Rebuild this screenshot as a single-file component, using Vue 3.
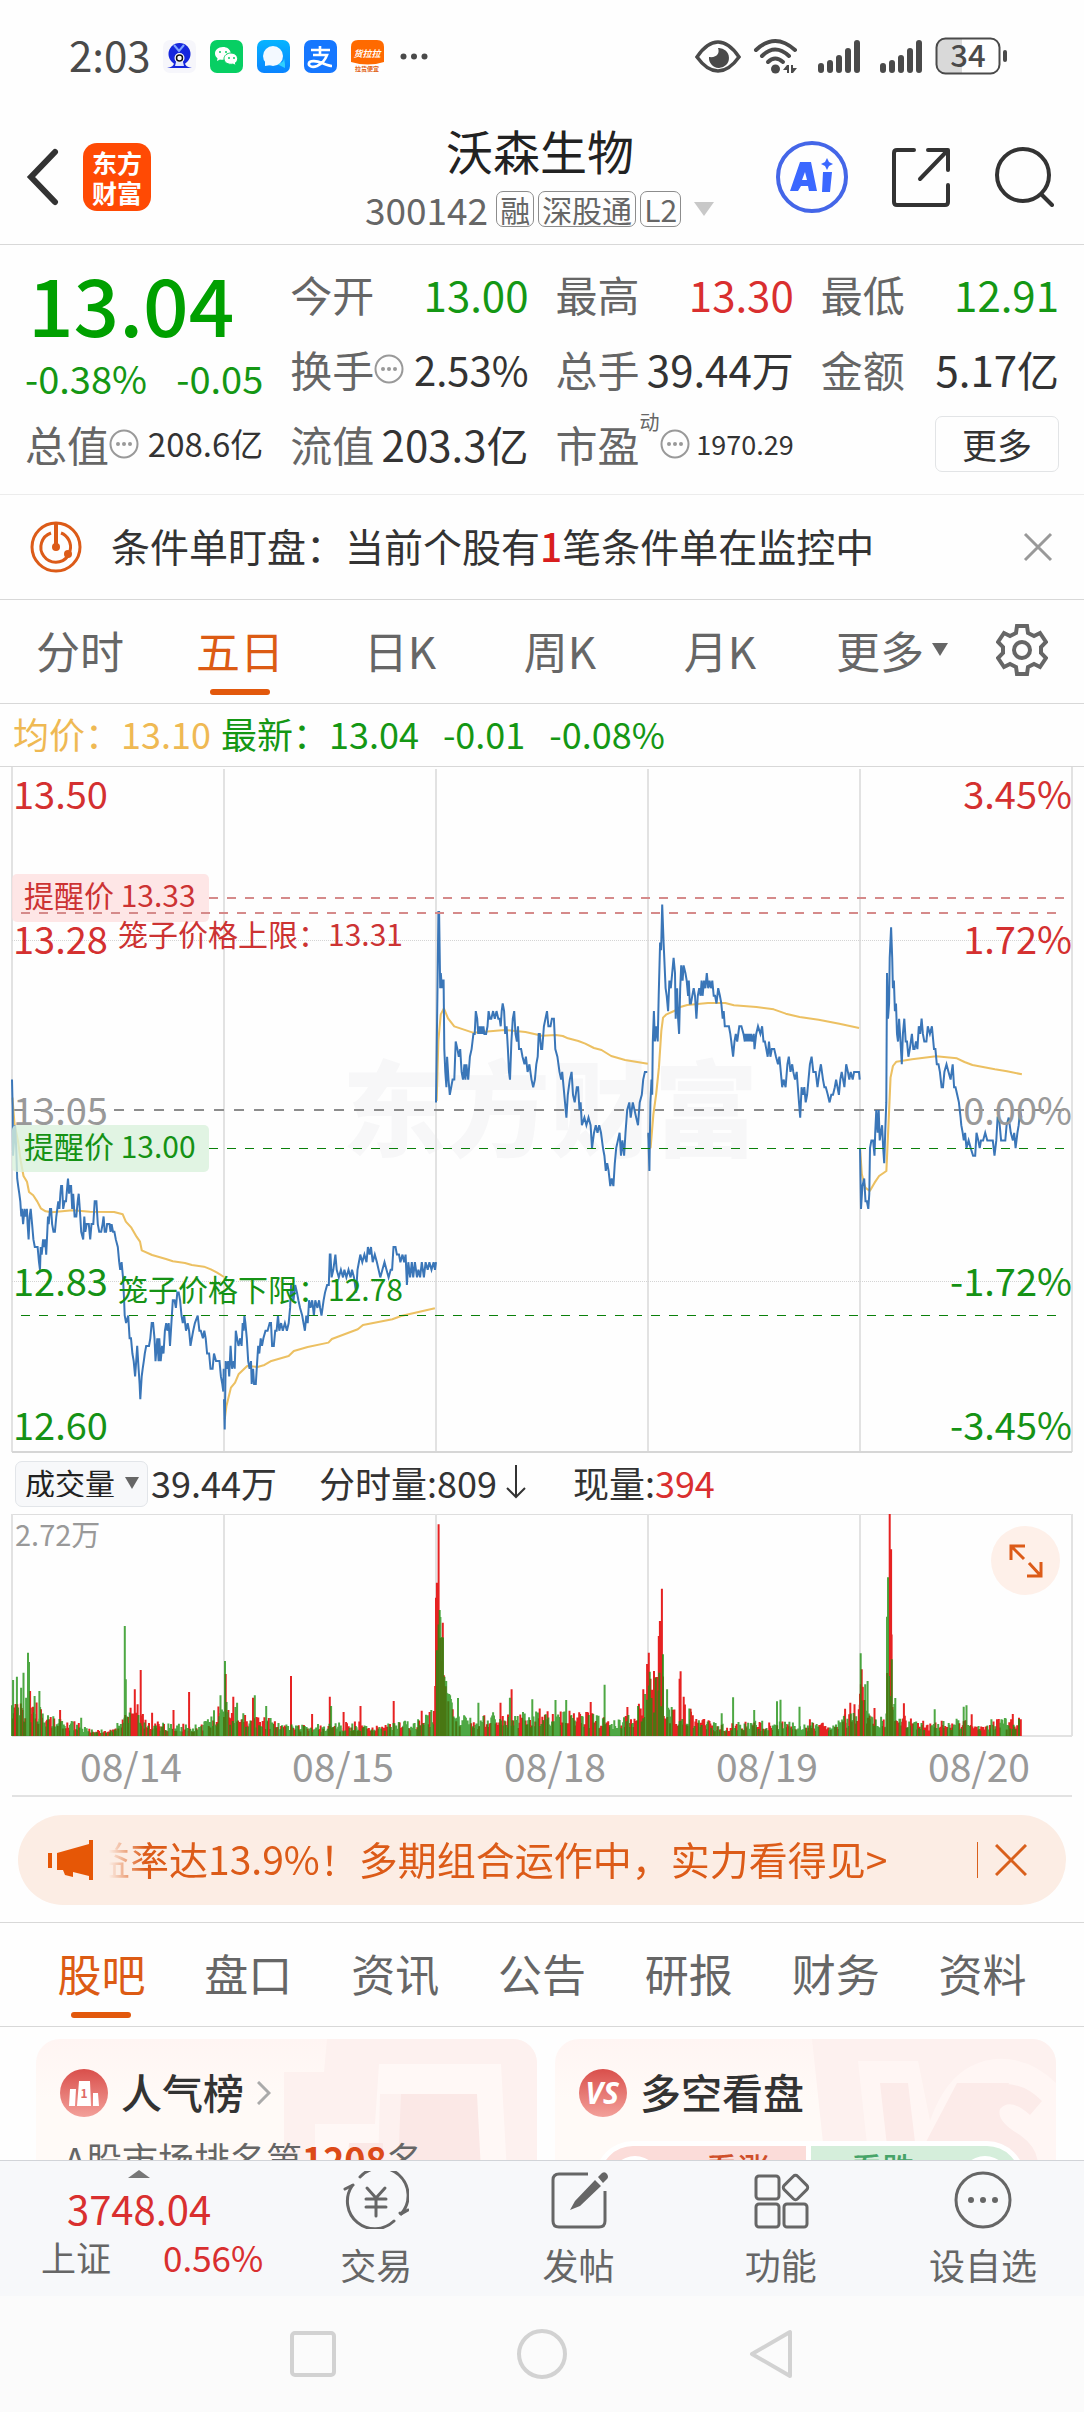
<script setup>
import { ref } from 'vue'

const periods = ['分时', '五日', '日K', '周K', '月K']
const activePeriod = ref('五日')
const sections = ['股吧', '盘口', '资讯', '公告', '研报', '财务', '资料']
const activeSection = ref('股吧')
const indicator = ref('成交量')
const dates = ['08/14', '08/15', '08/18', '08/19', '08/20']

const quoteColumns = [
  [
    { label: '今开', value: '13.00', tone: 'down' },
    { label: '换手', info: true, value: '2.53%', size: 'percent' },
    { label: '流值', value: '203.3亿' },
  ],
  [
    { label: '最高', value: '13.30', tone: 'up' },
    { label: '总手', value: '39.44万' },
    { label: '市盈', sup: '动', info: true, value: '1970.29', size: 'tiny' },
  ],
  [
    { label: '最低', value: '12.91', tone: 'down' },
    { label: '金额', value: '5.17亿' },
    { more: true },
  ],
]

const LEFT = 12
const DAY = 212
const SLOTS = 613
const BASE = 343
const TICK = 7.61

// One string per trading day: "slot,ticks from the 13.05 close"
const prices = [
  '0,4 2,0 3,-6 6,-4 9,-2 12,-5 15,-9 18,-10 21,-11 24,-12 27,-14 29,-13 32,-15 36,-13 39,-14 43,-13 45,-15 48,-17 51,-14 54,-13 58,-15 62,-17 66,-18 74,-18 78,-20 81,-21 83,-18 86,-19 90,-17 93,-18 96,-17 99,-19 102,-16 104,-14 106,-15 110,-13 113,-13 116,-15 120,-16 124,-16 128,-14 131,-13 134,-12 137,-13 140,-11 142,-10 145,-10 148,-13 152,-12 156,-12 160,-10 162,-9 165,-11 168,-10 171,-10 174,-13 177,-11 181,-14 186,-14 190,-12 193,-11 196,-13 200,-16 206,-17 209,-14 212,-16 216,-15 222,-15 226,-17 230,-15 235,-15 239,-12 244,-12 248,-15 252,-16 258,-16 262,-15 265,-14 268,-16 272,-16 275,-15 282,-15 285,-16 288,-15 292,-16 296,-16 300,-17 306,-18 310,-20 313,-21 317,-20 321,-22 324,-25 326,-27 330,-28 336,-27 340,-30 344,-30 348,-32 352,-33 356,-35 359,-33 362,-31 366,-34 369,-36 371,-38 375,-35 378,-34 381,-33 384,-32 388,-31 396,-31 400,-30 404,-28 408,-28 412,-30 415,-33 420,-30 424,-33 426,-30 430,-33 434,-31 438,-32 442,-29 446,-28 449,-29 453,-28 457,-31 461,-28 465,-25 470,-25 474,-26 478,-24 482,-24 486,-25 490,-27 494,-28 498,-27 503,-29 508,-28 512,-29 516,-31 520,-30 524,-29 529,-28 537,-27 542,-29 546,-29 552,-30 556,-29 560,-30 564,-32 570,-32 574,-34 580,-34 584,-32 590,-33 595,-33 600,-33 604,-35 608,-36 611,-37 612,-34',
  '0,-38 2,-42 5,-33 8,-34 12,-33 15,-35 19,-31 23,-34 28,-33 31,-34 34,-29 38,-30 42,-31 47,-30 51,-31 54,-28 57,-29 59,-27 62,-28 66,-30 70,-33 74,-34 78,-33 80,-36 84,-34 87,-36 92,-36 96,-33 99,-31 102,-32 106,-30 110,-31 114,-30 120,-29 126,-29 132,-28 136,-28 139,-31 144,-31 148,-29 152,-29 156,-27 160,-29 165,-28 170,-29 176,-28 182,-29 187,-28 191,-26 194,-23 198,-24 201,-25 206,-23 211,-24 215,-25 220,-26 226,-27 230,-28 234,-29 238,-27 242,-28 246,-25 250,-26 255,-25 260,-27 264,-25 270,-26 275,-25 278,-26 282,-27 288,-25 292,-24 298,-23 303,-23 306,-19 308,-19 311,-22 316,-21 322,-19 326,-21 332,-22 338,-21 344,-22 348,-21 354,-22 360,-21 366,-22 370,-21 376,-22 382,-24 386,-21 390,-20 394,-19 400,-20 406,-19 412,-20 416,-18 421,-19 425,-18 430,-20 436,-19 442,-20 447,-21 452,-22 458,-21 464,-20 470,-21 476,-22 482,-21 486,-21 490,-18 496,-18 500,-19 506,-19 510,-20 516,-19 521,-20 525,-19 529,-23 533,-20 538,-22 543,-20 547,-22 552,-20 558,-22 562,-21 567,-22 572,-20 578,-22 583,-20 589,-21 594,-20 600,-21 606,-20 610,-21 613,-20',
  '0,1 4,15 7,26 9,26 12,16 14,18 17,16 19,17 22,17 24,8 27,5 30,3 32,7 36,4 40,2 44,3 48,4 53,4 57,9 62,8 66,7 70,8 74,5 78,4 82,6 85,4 88,6 93,4 98,7 103,8 108,10 112,10 115,13 119,12 122,10 125,11 128,10 131,11 134,10 137,11 140,10 145,10 149,11 152,13 156,12 160,12 165,13 170,12 175,13 180,12 184,12 187,11 190,13 193,14 197,13 200,10 204,11 208,8 211,5 214,4 218,9 222,12 226,13 230,10 234,9 237,11 240,8 246,8 250,7 256,6 260,7 265,5 270,6 276,4 281,3 286,4 290,6 294,7 297,10 300,10 304,8 307,8 312,11 321,13 325,11 331,11 335,12 341,12 345,8 351,7 357,5 362,4 365,5 369,3 373,1 377,-1 381,2 387,4 392,5 396,2 401,1 407,3 411,3 415,0 418,1 422,-2 429,-1 435,-2 441,-1 447,-2 451,-5 457,-3 462,-2 467,-3 472,-2 477,-3 483,-5 487,-6 491,-8 495,-7 499,-8 504,-10 508,-9 513,-10 517,-7 521,-5 526,-4 531,-3 535,-6 539,-4 544,-6 548,-3 553,0 559,1 563,-1 569,1 574,0 579,-1 584,-2 589,1 595,2 599,4 604,5 611,5',
  '1,-3 4,-8 7,1 10,4 12,2 14,9 17,13 20,9 24,11 28,9 31,15 35,22 38,21 41,27 45,22 48,19 51,16 54,15 58,13 62,17 66,16 70,18 74,20 78,18 80,12 84,16 87,12 90,10 93,16 96,19 100,17 103,19 108,18 112,17 116,15 118,17 121,14 124,14 128,15 132,16 136,15 140,12 144,15 148,16 152,15 155,17 158,15 162,17 166,16 170,18 174,16 178,17 182,16 186,17 190,15 194,15 198,14 203,16 208,15 212,14 216,12 219,13 222,11 226,11 234,11 238,10 241,9 246,7 250,9 254,10 258,9 264,11 270,11 276,10 280,9 282,10 284,9 286,10 288,9 290,10 292,9 294,10 296,9 298,10 302,9 306,10 308,8 313,10 318,11 325,10 330,11 334,9 338,9 342,8 346,7 350,9 354,7 358,8 365,8 370,7 376,6 380,7 384,5 388,3 392,4 398,3 403,6 407,7 412,5 417,6 420,5 425,4 430,5 435,2 440,-1 444,3 448,2 452,3 456,1 460,2 464,4 468,6 473,7 478,5 485,5 490,3 496,5 500,6 506,4 510,3 514,3 520,2 525,1 530,2 535,2 540,3 544,4 548,3 552,2 556,4 560,5 564,4 568,3 573,6 578,5 582,4 586,5 592,4 596,5 605,5 610,5 612,4',
  '0,-5 3,-13 7,-10 12,-9 16,-12 20,-12 24,-13 27,-11 29,-5 33,-4 38,-4 42,-6 44,-3 47,0 51,-3 54,0 57,-4 60,-3 64,-2 67,-5 70,-7 73,-3 76,1 78,18 81,12 84,14 86,20 88,22 90,24 93,20 95,16 98,17 101,13 104,14 107,10 110,9 113,12 117,9 121,6 124,10 128,12 132,9 136,9 140,7 144,8 150,10 154,8 158,8 162,9 166,8 170,11 174,10 178,12 182,10 186,9 192,9 196,11 202,10 208,11 214,8 218,8 222,6 227,6 231,5 236,3 240,3 244,5 250,6 256,5 262,4 268,6 272,3 276,3 281,2 286,1 291,-1 293,-2 297,-3 300,-4 304,-3 308,-5 314,-4 320,-5 327,-6 333,-6 337,-3 342,-4 346,-5 350,-4 356,-4 362,-3 368,-4 376,-4 384,-4 389,-6 394,-4 398,-1 402,-1 408,-4 414,-4 420,-4 424,-2 430,-1 436,-3 442,-4 446,-3 450,-5 455,-3 459,-2 463,0 467,-1',
]

const pricePaths = prices.map((line, day) =>
  line
    .split(' ')
    .map((pair) => {
      const [slot, tick] = pair.split(',').map(Number)
      const x = LEFT + day * DAY + (slot * DAY) / SLOTS
      const y = BASE - tick * TICK
      return `${x.toFixed(1)},${y.toFixed(1)}`
    })
    .join(' ')
)

const averages = [
  '36,290 42,370 52,420 60,480 68,525 78,542 84,573 96,583 108,602 118,622 132,631 150,634 210,628 260,632 330,633 355,640 364,662 380,680 395,707 405,722 410,748 440,762 480,774 500,781 535,786 555,792 590,797 610,805 628,815 648,828',
  '650,1255 655,1215 668,1160 680,1145 690,1120 715,1095 745,1098 765,1092 785,1080 835,1065 850,1050 890,1038 950,1025 960,1014 1035,985 1050,972 1135,955 1160,945 1258,922',
  '1263,300 1268,120 1275,40 1284,22 1296,52 1314,76 1368,95 1460,87 1520,93 1568,104 1608,102 1628,105 1643,112 1673,120 1693,128 1718,141 1740,147 1768,165 1808,177 1874,188',
  '1875,400 1882,440 1890,340 1898,280 1906,200 1913,90 1918,50 1928,40 1950,30 1968,18 1988,12 2048,6 2098,6 2123,13 2188,18 2238,25 2273,38 2313,48 2368,56 2428,68 2485,81',
  '2488,445 2493,520 2503,560 2516,570 2530,545 2543,525 2564,510 2571,350 2576,230 2583,195 2593,182 2638,175 2708,166 2768,172 2790,183 2813,192 2878,205 2913,211 2956,220',
]

// Usual turnover through each day: [slot, height]
const envelopes = [
  [[0, 110], [60, 95], [90, 75], [130, 45], [180, 38], [210, 26], [270, 18], [300, 20], [310, 60], [370, 85], [385, 42], [450, 35], [540, 30], [570, 55], [600, 80], [613, 90]],
  [[0, 90], [50, 65], [80, 60], [130, 48], [200, 28], [300, 32], [400, 38], [420, 24], [500, 35], [560, 45], [600, 70], [613, 100]],
  [[0, 380], [18, 320], [28, 160], [45, 90], [80, 55], [120, 46], [160, 60], [220, 55], [300, 70], [340, 60], [400, 65], [480, 55], [520, 38], [570, 60], [600, 110], [613, 120]],
  [[0, 160], [40, 190], [50, 100], [80, 75], [110, 80], [140, 50], [200, 32], [240, 34], [300, 38], [400, 38], [500, 34], [570, 55], [613, 90]],
  [[0, 150], [20, 90], [40, 50], [75, 60], [80, 260], [90, 300], [98, 100], [120, 60], [160, 40], [220, 36], [300, 48], [320, 36], [360, 24], [400, 48], [467, 45]],
]
const spikes =
  '38,168,g 49,178,g 61,145,g 68,190,g 81,250,g 84,222,g 87,135,r 100,120,g 114,135,g 174,78,r 235,55,g 361,330,g 364,170,g 390,140,r 407,198,r 440,70,r 502,78,r 547,132,r 638,122,g 651,225,g 653,186,r 675,118,r 686,100,g 732,115,r 737,122,g 770,90,g 842,180,r 903,66,r 954,118,r 958,90,g 994,72,r 1043,90,r 1139,105,r 1220,76,r 1259,150,r 1264,460,r 1269,635,r 1272,378,g 1275,295,r 1281,340,r 1278,250,g 1286,178,g 1291,165,g 1325,114,g 1384,100,g 1448,100,r 1480,140,r 1475,115,g 1540,110,g 1607,108,g 1638,108,g 1709,102,r 1749,154,g 1815,87,r 1861,140,r 1872,216,r 1877,250,r 1882,172,r 1892,195,r 1897,175,g 1906,300,r 1909,345,r 1915,442,r 1918,245,g 1930,140,g 1966,172,r 1969,194,r 1978,118,r 1998,82,r 2088,68,g 2121,116,g 2182,78,g 2248,104,g 2258,109,g 2313,88,g 2343,50,r 2445,82,r 2460,100,r 2472,95,r 2490,248,g 2493,200,r 2496,146,r 2503,155,g 2510,165,g 2530,84,r 2566,358,g 2569,476,g 2574,666,r 2578,560,r 2580,230,g 2590,114,g 2615,98,r 2704,80,g 2788,88,g 2796,92,g 2811,65,r 2868,50,g 2930,66,r 2948,55,r'

let seed = 20
const random = () => {
  seed = (seed * 16807) % 2147483647
  return seed / 2147483647
}
const levelAt = (curve, slot) => {
  const next = curve.findIndex(([s]) => s >= slot)
  if (next <= 0) return curve[0][1]
  const [s0, h0] = curve[next - 1]
  const [s1, h1] = curve[next]
  return h0 + ((h1 - h0) * (slot - s0)) / (s1 - s0)
}
const volume = { r: '', g: '' }
const addBar = (x, h, side) => {
  volume[side] += `M${x.toFixed(1)} 222v-${h.toFixed(1)}`
}
envelopes.forEach((curve, day) => {
  const end = curve[curve.length - 1][0]
  let bull = true
  for (let slot = 0; slot < end; slot += 2.54) {
    if (random() < 0.42) bull = !bull
    const h = levelAt(curve, slot) * (0.4 + 0.8 * random() ** 1.3)
    addBar(LEFT + day * DAY + (slot * DAY) / SLOTS, h / 3, bull ? 'r' : 'g')
  }
})
spikes.split(' ').forEach((item) => {
  const [x, h, side] = item.split(',')
  addBar(Number(x) / 2.893, Number(h) / 3, side)
})
</script>

<template>
  <main class="app">
    <header class="status">
      <span class="clock">2:03</span>
      <div class="status-apps">
        <svg viewBox="0 0 33 33"><rect width="33" height="33" rx="7" fill="#f6f6fb" /><circle cx="16.500" cy="14" r="11" fill="#1526dd" /><path d="M11 5l5 6 5-6" fill="none" stroke="#7fa4ff" stroke-width="2" /><circle cx="16.500" cy="18" r="5" fill="#fff" /><circle cx="16.500" cy="18" r="3" fill="none" stroke="#111" stroke-width="1.500" /><path d="M4 28q7-1 7-5h11q0 4 7 5z" fill="#1526dd" /><path d="M13 22h7l1 4h-9z" fill="#dfe6ff" /></svg>
        <svg viewBox="0 0 33 33"><rect width="33" height="33" rx="7" fill="#07cf63" /><path d="M13 7c-5 0-8 3-8 6.500 0 2 1 3.500 2.500 4.700L7 21l3-1.500c3 .8 9-.5 11-6C20 9 17 7 13 7z" fill="#fff" /><path d="M21 13c-4 0-7 2.500-7 5.800 0 3.500 4 6.300 9 5.300l3 1.500-.6-2.600C30 19.500 27 13 21 13z" fill="#fff" stroke="#07cf63" /><g fill="#07cf63"><circle cx="10" cy="12" r="1" /><circle cx="16" cy="12" r="1" /><circle cx="19" cy="18" r="1" /><circle cx="24" cy="18" r="1" /></g></svg>
        <svg viewBox="0 0 33 33"><defs><linearGradient id="chat" x2="0" y2="1"><stop stop-color="#05b4ff" /><stop offset="1" stop-color="#0a84ff" /></linearGradient></defs><rect width="33" height="33" rx="7" fill="url(#chat)" /><path d="M20 24c4-1 7-2 7-6l1 6v4z" fill="#2fd0ff" /><circle cx="16" cy="16" r="10" fill="#f3f9ff" /><path d="M8 20v6l6-1z" fill="#f3f9ff" /></svg>
        <svg viewBox="0 0 33 33"><rect width="33" height="33" rx="7" fill="#1677ff" /><path d="M7 10h19M16 6v9M9 15h14q-3 8-10 11c-5 2-9 0-8-3s8-2 13 0 7 3 10 3" fill="none" stroke="#fff" stroke-width="2.600" /></svg>
        <svg viewBox="0 0 33 33"><rect width="33" height="33" rx="7" fill="#fff" /><path d="M0 22V7q0-7 7-7h19q7 0 7 7v15q-16 5-33 0z" fill="#ff6a00" /><text x="16" y="17" font-size="9" font-weight="700" font-style="italic" text-anchor="middle" fill="#fff">货拉拉</text><text x="16" y="31" font-size="6" font-weight="700" text-anchor="middle" fill="#e06010">拉货便宜</text></svg>
        <svg class="dots" viewBox="0 0 30 33"><g fill="#4a4a4a"><circle cx="4" cy="16.500" r="3" /><circle cx="14.500" cy="16.500" r="3" /><circle cx="25" cy="16.500" r="3" /></g></svg>
      </div>
      <div class="status-signals">
        <svg width="46" height="36" viewBox="0 0 46 36"><path d="M2 19Q12 4 23 4t21 15Q34 33 23 33T2 19z" fill="none" stroke="#4a4a4a" stroke-width="3.500" /><path d="M23 10c2 5-1 10-9 9a10 10 0 1 0 9-9z" fill="#4a4a4a" /></svg>
        <svg width="46" height="36" viewBox="0 0 46 36"><g fill="none" stroke="#4a4a4a" stroke-width="4" stroke-linecap="round"><path d="M3 12Q22-6 42 12" /><path d="M9 18Q22 5 36 18" /><path d="M15 24Q22 17 30 24" /></g><circle cx="22.500" cy="31" r="4.500" fill="#4a4a4a" /><path d="M35 27v8M39 27v8" stroke="#4a4a4a" stroke-width="2" /><path d="M34 27v5h-4zM40 35v-5h4z" fill="#4a4a4a" /></svg>
        <svg v-for="n in 2" :key="n" class="bars" width="44" height="36" viewBox="0 0 44 36"><g stroke="#4a4a4a" stroke-width="6" stroke-linecap="round"><path d="M4 28v4M13 25v7M22 20v12M31 13v19M40 5v27" /></g></svg>
        <svg width="74" height="38" viewBox="0 0 74 38"><path d="M2 10q0-8 8-8h17v34H10q-8 0-8-8z" fill="#d9d9d9" /><rect x="1.500" y="1.500" width="63" height="35" rx="9" fill="none" stroke="#4a4a4a" stroke-width="2" /><path d="M70 15v8" stroke="#4a4a4a" stroke-width="4" stroke-linecap="round" /><text x="33" y="30" font-size="31" font-weight="500" text-anchor="middle" fill="#4a4a4a">34</text></svg>
      </div>
    </header>

    <section class="title-bar">
      <div class="title-left">
        <button class="plain" aria-label="返回"><svg width="34" height="58" viewBox="0 0 34 58"><path d="M29 4L5 29l24 25" fill="none" stroke="#333" stroke-width="6" stroke-linecap="round" /></svg></button>
        <div class="logo"><span>东方</span><span>财富</span></div>
      </div>
      <div class="title-center">
        <h1>沃森生物</h1>
        <div class="code-row">
          <span class="code">300142</span><span class="tag">融</span><span class="tag">深股通</span><span class="tag">L2</span>
          <svg width="22" height="16" viewBox="0 0 22 16"><path d="M1 1h20L11 15z" fill="#c8c8c8" /></svg>
        </div>
      </div>
      <div class="title-right">
        <button class="plain" aria-label="AI 助手"><svg width="72" height="72" viewBox="0 0 72 72"><circle cx="36" cy="36" r="34" fill="none" stroke="#4466e8" stroke-width="4" /><path d="M24 21h11l6 29h-8l-1-5h-7l-3 5h-8zM29 31l-3 8h5zM47 31h9l-2 20h-8zM51 17l2 4 4 2-4 2-2 4-2-4-4-2 4-2z" fill="#3b68ff" fill-rule="evenodd" /></svg></button>
        <button class="plain" aria-label="分享"><svg width="58" height="60" viewBox="0 0 58 60"><g fill="none" stroke="#333" stroke-width="4" stroke-linecap="round" stroke-linejoin="round"><path d="M22 3H5q-3 0-3 3v49q0 3 3 3h48q3 0 3-3V38M36 3h20v20M55 4L28 32" /></g></svg></button>
        <button class="plain" aria-label="搜索"><svg width="60" height="60" viewBox="0 0 60 60"><g fill="none" stroke="#333" stroke-width="4" stroke-linecap="round"><circle cx="29" cy="28" r="26" /><path d="M48 48l10 10" /></g></svg></button>
      </div>
    </section>

    <section class="quotes">
      <div class="quote-col">
        <div class="last down">13.04</div>
        <div class="change down"><span>-0.38%</span><span>-0.05</span></div>
        <div class="quote-row">
          <span class="label">总值</span>
          <svg class="info" viewBox="0 0 30 30"><circle cx="15" cy="15" r="13.500" fill="none" stroke="#999" stroke-width="2" /><g fill="#999"><circle cx="9" cy="15" r="2" /><circle cx="15" cy="15" r="2" /><circle cx="21" cy="15" r="2" /></g></svg>
          <span class="value small">208.6亿</span>
        </div>
      </div>
      <div v-for="(col, i) in quoteColumns" :key="i" class="quote-col">
        <div v-for="(q, j) in col" :key="j" class="quote-row">
          <button v-if="q.more" class="more">更多</button>
          <template v-else>
            <span class="label">{{ q.label }}</span>
            <sup v-if="q.sup">{{ q.sup }}</sup>
            <svg v-if="q.info" class="info" viewBox="0 0 30 30"><circle cx="15" cy="15" r="13.500" fill="none" stroke="#999" stroke-width="2" /><g fill="#999"><circle cx="9" cy="15" r="2" /><circle cx="15" cy="15" r="2" /><circle cx="21" cy="15" r="2" /></g></svg>
            <span class="value" :class="[q.tone, q.size]">{{ q.value }}</span>
          </template>
        </div>
      </div>
    </section>

    <section class="notice">
      <svg width="52" height="52" viewBox="0 0 52 52"><g fill="none" stroke="#dc5b18" stroke-width="3"><circle cx="26" cy="26" r="24" /><path d="M21 12a15 15 0 1 0 17 23M31 12a15 15 0 0 1 9 18" /><path d="M26 2v24" stroke-width="4" /></g><circle cx="26" cy="26" r="4" fill="#dc5b18" /><circle cx="38" cy="33" r="4" fill="#dc5b18" /></svg>
      <p>条件单盯盘：当前个股有<b>1</b>笔条件单在监控中</p>
      <button class="plain" aria-label="关闭"><svg width="32" height="32" viewBox="0 0 32 32"><path d="M3 3l26 26M29 3L3 29" stroke="#999" stroke-width="3" /></svg></button>
    </section>

    <nav class="periods">
      <button v-for="p in periods" :key="p" class="tab" :class="{ active: p === activePeriod }" @click="activePeriod = p">{{ p }}</button>
      <button class="tab">更多<svg width="16" height="14" viewBox="0 0 16 14"><path d="M0 0h16L8 13z" fill="#666" /></svg></button>
      <button class="tab" aria-label="设置"><svg width="52" height="52" viewBox="0 0 52 52"><g fill="none" stroke="#666" stroke-width="4"><path d="M21 2h10l1 7 6 3 6-3 6 9-5 5v6l5 5-6 9-6-3-6 3-1 7H21l-1-7-6-3-6 3-6-9 5-5v-6l-5-5 6-9 6 3 6-3z" /><circle cx="26" cy="26" r="8" /></g></svg></button>
    </nav>

    <section class="legend">
      <span class="avg">均价：13.10</span>
      <span class="down">最新：13.04</span>
      <span class="down gap">-0.01</span>
      <span class="down gap">-0.08%</span>
    </section>

    <svg class="chart" viewBox="0 0 1084 686">
      <text x="550" y="382" font-size="104" font-weight="900" text-anchor="middle" fill="#f7f7f8">东方财富</text>
      <g stroke="#e2e2e2" stroke-width="2"><path d="M12 0V685M224 2V685M436 2V685M648 2V685M860 2V685M1072 0V685" /></g>
      <path d="M12 685H1072" stroke="#d6d6d6" stroke-width="2" />
      <path d="M12 173.500H1072M12 514.500H1072" stroke="#d4d4d4" stroke-dasharray="1 1" />
      <path d="M14 343H1065" stroke="#8c8c8c" stroke-width="2" stroke-dasharray="10 10" />
      <g transform="translate(0 234) scale(.3457 .3333)" fill="none" stroke="#ecc062" stroke-width="6" stroke-linejoin="round"><polyline v-for="(line, i) in averages" :key="i" :points="line" /></g>
      <g fill="none" stroke="#3a76b8" stroke-width="2"><polyline v-for="(line, i) in pricePaths" :key="i" :points="line" /></g>
      <rect x="12" y="107" width="197" height="48" rx="5" fill="#fddede" fill-opacity=".75" />
      <rect x="12" y="358" width="197" height="47" rx="5" fill="#d9f1dc" fill-opacity=".8" />
      <path d="M209 131H1066M21 146H1057" stroke="#d58a8a" stroke-width="2" stroke-dasharray="9 9" />
      <path d="M209 381.500H1066M21 548.500H1057" stroke="#0a800a" stroke-dasharray="9 9" />
      <g font-size="38">
        <g fill="#d43030"><text x="13" y="42">13.50</text><text x="13" y="187">13.28</text></g>
        <g fill="#999"><text x="13" y="358">13.05</text><text x="1072" y="358" text-anchor="end">0.00%</text></g>
        <g fill="#159215"><text x="13" y="529">12.83</text><text x="13" y="673">12.60</text></g>
        <g fill="#d43030" text-anchor="end"><text x="1072" y="42">3.45%</text><text x="1072" y="187">1.72%</text></g>
        <g fill="#159215" text-anchor="end"><text x="1072" y="529">-1.72%</text><text x="1072" y="673">-3.45%</text></g>
      </g>
      <g font-size="30">
        <g fill="#cc3333"><text x="24" y="140">提醒价 13.33</text><text x="118" y="179">笼子价格上限：13.31</text></g>
        <g fill="#159215"><text x="24" y="391">提醒价 13.00</text><text x="118" y="534">笼子价格下限：12.78</text></g>
      </g>
    </svg>

    <section class="volume-head">
      <label class="picker">
        <select v-model="indicator" aria-label="指标"><option>成交量</option></select>
        <svg width="14" height="12" viewBox="0 0 14 12"><path d="M0 0h14L7 12z" fill="#666" /></svg>
      </label>
      <span class="total">39.44万</span>
      <span class="minute">分时量:809<svg width="22" height="34" viewBox="0 0 22 34"><path d="M11 0v32M2 23l9 9 9-9" fill="none" stroke="#333" stroke-width="2" /></svg></span>
      <span>现量:<i class="up">394</i></span>
    </section>

    <div class="volume">
      <svg class="chart" viewBox="0 0 1084 223">
        <path d="M12 .500H1072" stroke="#dedede" />
        <g stroke="#e2e2e2" stroke-width="2"><path d="M12 0V222M224 0V222M436 0V222M648 0V222M860 0V222M1072 0V222M12 222H1072" /></g>
        <path :d="volume.r" stroke="#e62222" stroke-width="2" />
        <path :d="volume.g" stroke="#1c8f10" stroke-opacity=".78" stroke-width="2" />
        <text x="15" y="32" font-size="29" fill="#999">2.72万</text>
      </svg>
      <button class="expand" aria-label="全屏"><svg width="34" height="34" viewBox="0 0 34 34"><g fill="none" stroke="#dc5b18" stroke-width="3"><path d="M2 16V2h14M3 3l12 12M32 18v14H18M31 31L20 19" /></g></svg></button>
    </div>
    <div class="dates"><span v-for="d in dates" :key="d">{{ d }}</span></div>

    <section class="promo">
      <svg width="46" height="40" viewBox="0 0 46 40"><path d="M0 13h4v15H0zM9 13l32-9V0h4v40h-4v-4l-16-4v5l-8-2-2-5H9z" fill="#e65706" /></svg>
      <a href="#" class="promo-text"><span>益率达13.9%！多期组合运作中，实力看得见&gt;</span></a>
      <i class="bar"></i>
      <button class="plain" aria-label="关闭广告"><svg width="32" height="32" viewBox="0 0 32 32"><path d="M1 1l30 30M31 1L1 31" stroke="#d9601c" stroke-width="3" /></svg></button>
    </section>

    <nav class="sections">
      <button v-for="s in sections" :key="s" class="tab" :class="{ active: s === activeSection }" @click="activeSection = s">{{ s }}</button>
    </nav>

    <section class="feed">
      <article class="card">
        <svg class="art" viewBox="0 0 260 170"><path d="M50 0h210v170H7V33h40z" fill="#fdf1ef" /><path d="M102 25h122l8 145h-44l-5-115h-80l-3 115H38V85h60z" fill="#fff8f6" /><path d="M124 55h76l6 115h-84v-66z" fill="#fbe8e6" /><path d="M72 104h34v66H68z" fill="#fbe8e6" /></svg>
        <h2>
          <svg width="48" height="48" viewBox="0 0 48 48"><defs><linearGradient id="badge" x2="0" y2="1"><stop stop-color="#d94f4b" /><stop offset="1" stop-color="#f3a09a" /></linearGradient></defs><circle cx="24" cy="24" r="24" fill="url(#badge)" /><path d="M10 20h6l-1 17H9zM19 12h11l1 25H17zM33 24h5l1 13h-6z" fill="#fff" /><text x="24" y="29" font-size="12" font-weight="700" text-anchor="middle" fill="#e06a66">1</text></svg>
          <span>人气榜</span>
          <svg width="14" height="24" viewBox="0 0 14 24"><path d="M1 1l11 11L1 23" fill="none" stroke="#aaa" stroke-width="3" /></svg>
        </h2>
        <p class="rank">A股市场排名第<b>1208</b>名</p>
      </article>
      <article class="card">
        <svg class="art" viewBox="0 0 260 170"><path d="M16 0h244v170H34z" fill="#fdf1ef" /><path d="M62 22h60l12 60q20-58 66-62 34-2 60 24v126H78z" fill="#fff6f4" /><path d="M84 44h28l9 76 40-76h52l-54 126H98z" fill="#fcebe9" /><path d="M246 62q-24-24-54-14-24 12-18 38 4 14 24 24 18 10 14 26-10 18-40 12l-8 22q52 6 72-24 16-30-12-50-24-14-20-26 10-12 30 6z" fill="#fcebe9" /></svg>
        <h2>
          <svg width="48" height="48" viewBox="0 0 48 48"><circle cx="24" cy="24" r="24" fill="url(#badge)" /><text x="23" y="35" font-size="30" font-weight="700" font-style="italic" text-anchor="middle" fill="#fff" font-family="Open Sans, sans-serif">VS</text></svg>
          <span>多空看盘</span>
        </h2>
        <div class="vote">
          <button class="bull"><i></i><span>看涨</span></button>
          <button class="bear"><span>看跌</span><i></i></button>
        </div>
      </article>
    </section>

    <footer class="dock">
      <div class="index">
        <svg width="22" height="8" viewBox="0 0 22 8"><path d="M0 8L11 0l11 8z" fill="#777" /></svg>
        <strong class="up">3748.04</strong>
        <div class="index-row"><span>上证</span><span class="up">0.56%</span></div>
      </div>
      <button class="dock-item">
        <svg width="66" height="58" viewBox="0 0 66 58"><g fill="none" stroke="#666" stroke-width="3" stroke-linecap="round" stroke-linejoin="round"><path d="M17 6A27.500 27.500 0 0 1 58 43" /><path d="M51 50A27.500 27.500 0 0 1 9 15" /><path d="M2 18l8-4M65 39l-7 4-1-1" /><path d="M24 17l9 10 9-10M33 27v18M23 28h20M23 36h20" /></g></svg>交易
      </button>
      <button class="dock-item">
        <svg width="58" height="58" viewBox="0 0 58 58"><path d="M38 3H9Q3 3 3 9v41q0 6 6 6h40q6 0 6-6V20" fill="none" stroke="#666" stroke-width="3" /><path d="M20 39l5-9 20-21 6 6-21 20zM48 6l4-4q3-2 5 1t0 5l-4 4z" fill="#666" /></svg>发帖
      </button>
      <button class="dock-item">
        <svg width="58" height="58" viewBox="0 0 58 58"><g fill="none" stroke="#666" stroke-width="3"><rect x="4" y="5" width="23" height="23" rx="3" /><rect x="4" y="33" width="23" height="23" rx="3" /><rect x="32" y="33" width="23" height="23" rx="3" /><rect x="34" y="7" width="19" height="19" rx="3" transform="rotate(45 43.500 16.500)" /></g></svg>功能
      </button>
      <button class="dock-item">
        <svg width="58" height="58" viewBox="0 0 58 58"><circle cx="29" cy="29" r="27" fill="none" stroke="#666" stroke-width="3" /><g fill="#666"><circle cx="17" cy="29" r="3" /><circle cx="29" cy="29" r="3" /><circle cx="41" cy="29" r="3" /></g></svg>设自选
      </button>
    </footer>

    <nav class="system">
      <button class="plain" aria-label="最近任务"><svg width="50" height="50" viewBox="0 0 50 50"><rect x="4" y="4" width="42" height="42" rx="3" fill="none" stroke="#d2d2d2" stroke-width="4" /></svg></button>
      <button class="plain" aria-label="主页"><svg width="52" height="52" viewBox="0 0 52 52"><circle cx="26" cy="26" r="23" fill="none" stroke="#d2d2d2" stroke-width="4" /></svg></button>
      <button class="plain" aria-label="后退"><svg width="50" height="52" viewBox="0 0 50 52"><path d="M44 4v44L6 26z" fill="none" stroke="#d2d2d2" stroke-width="4" stroke-linejoin="round" /></svg></button>
    </nav>
  </main>
</template>

<style>
body {
  background: #fdfdfd;
}
</style>

<style scoped>
.app {
  display: flex;
  flex-direction: column;
  height: 100vh;
  overflow: hidden;
  background: #fefefe;
  color: #333;
  font-family: "Noto Sans CJK SC", "Noto Sans", sans-serif;
  font-size: 36px;
  line-height: 1;
}
.app > * {
  flex-shrink: 0;
  box-sizing: border-box;
}
.app svg {
  display: block;
  flex-shrink: 0;
}
button {
  margin: 0;
  padding: 0;
  border: 0;
  background: none;
  color: inherit;
  font: inherit;
}
.plain {
  display: block;
}
h1, h2, p {
  margin: 0;
}
i {
  font-style: normal;
}
.up {
  color: #d92f2f;
}
.down {
  color: #149714;
}

.status {
  display: flex;
  align-items: center;
  height: 110px;
  padding: 2px 75px 0 69px;
}
.clock {
  padding-bottom: 4px;
  color: #4a4a4a;
  font-size: 42px;
  line-height: 48px;
}
.status-apps {
  display: flex;
  gap: 14px;
  margin-left: 12px;
}
.status-apps svg {
  width: 33px;
  height: 33px;
}
.status-signals {
  display: flex;
  align-items: center;
  gap: 12px;
  margin-left: auto;
}
.status-signals .bars {
  margin-left: 6px;
}

.title-bar {
  display: grid;
  grid-template-columns: 1fr auto 1fr;
  align-items: center;
  height: 135px;
  padding: 0 30px 0 26px;
  border-bottom: 1px solid #d8d8d8;
}
.title-left,
.title-right {
  display: flex;
  align-items: center;
}
.title-left {
  gap: 23px;
}
.title-right {
  gap: 44px;
  justify-content: flex-end;
}
.logo {
  display: flex;
  flex-direction: column;
  justify-content: center;
  gap: 2px;
  width: 68px;
  height: 68px;
  border-radius: 14px;
  background: #ff4a04;
  color: #fff;
  font-size: 25px;
  font-weight: 700;
  line-height: 28px;
  text-align: center;
}
.title-center {
  display: flex;
  flex-direction: column;
  align-items: center;
  gap: 12px;
  padding-bottom: 6px;
}
h1 {
  color: #222;
  font-size: 47px;
  font-weight: 400;
  line-height: 58px;
}
.code-row {
  display: flex;
  align-items: center;
  gap: 4px;
  color: #666;
}
.code {
  margin-right: 4px;
  font-size: 37px;
  line-height: 36px;
}
.code-row svg {
  margin-left: 8px;
}
.tag {
  padding: 0 3px;
  border: 1px solid #8c8c8c;
  border-radius: 7px;
  font-size: 30px;
  line-height: 34px;
}

.quotes {
  display: grid;
  grid-template-columns: repeat(4, 1fr);
  gap: 27px;
  padding: 11px 25px 13px;
  border-bottom: 1px solid #ececec;
  font-size: 42px;
}
.quote-row {
  display: flex;
  align-items: center;
  height: 75px;
  white-space: nowrap;
}
.label {
  color: #666;
}
.info {
  width: 30px;
  height: 30px;
}
sup {
  align-self: flex-start;
  color: #666;
  font-size: 20px;
  line-height: 32px;
}
.value {
  margin-left: auto;
}
.value.percent {
  font-size: 40px;
}
.value.small {
  font-size: 33px;
}
.value.tiny {
  font-size: 27px;
}
.last {
  padding-left: 3px;
  color: #00a000;
  font-size: 80px;
  font-weight: 500;
  line-height: 93px;
}
.change {
  display: flex;
  justify-content: space-between;
  font-size: 38px;
  line-height: 57px;
}
.more {
  width: 124px;
  height: 56px;
  margin-left: auto;
  border: 1px solid #e2e4e6;
  border-radius: 7px;
  font-size: 35px;
  line-height: 48px;
}

.notice {
  display: flex;
  align-items: center;
  height: 105px;
  padding: 0 30px;
  border-bottom: 1px solid #d8d8d8;
  font-size: 39px;
}
.notice p {
  flex: 1;
  margin-left: 29px;
  padding-bottom: 4px;
  white-space: nowrap;
}
.notice b {
  color: #d81e1e;
  font-weight: 500;
}

.periods {
  display: grid;
  grid-template-columns: repeat(5, 160fr) 184fr 76fr;
  height: 104px;
  padding-right: 24px;
  border-bottom: 1px solid #d8d8d8;
}
.sections {
  display: flex;
  height: 105px;
  padding: 0 28px;
  border-top: 1px solid #d8d8d8;
  border-bottom: 1px solid #d8d8d8;
}
.tab {
  position: relative;
  display: flex;
  flex: 1;
  align-items: center;
  justify-content: center;
  gap: 8px;
  padding-bottom: 4px;
  color: #666;
  font-size: 44px;
  line-height: 56px;
  white-space: nowrap;
}
.tab.active {
  color: #dc5b14;
}
.tab.active::after {
  position: absolute;
  bottom: 8px;
  left: 50%;
  width: 60px;
  height: 6px;
  margin-left: -30px;
  border-radius: 3px;
  background: #e2580c;
  content: "";
}

.legend {
  display: flex;
  align-items: center;
  height: 63px;
  padding: 0 0 4px 13px;
  border-bottom: 1px solid #d8d8d8;
}
.avg {
  margin-right: 10px;
  color: #efb953;
}
.legend .gap {
  margin-left: 24px;
}

.chart {
  width: 100%;
  height: auto;
}
.volume-head {
  display: flex;
  align-items: center;
  height: 61px;
  padding-left: 15px;
}
.volume-head > span {
  padding-bottom: 4px;
}
.picker {
  position: relative;
  display: block;
  margin-right: 3px;
}
.picker select {
  display: block;
  width: 133px;
  height: 46px;
  padding: 0 0 4px 9px;
  border: 1px solid #e2e5e9;
  border-radius: 7px;
  background: #f7f8fa;
  color: #222;
  font: inherit;
  font-size: 30px;
  appearance: none;
}
.picker svg {
  position: absolute;
  top: 16px;
  right: 9px;
}
.total {
  margin-right: 42px;
}
.minute {
  display: flex;
  align-items: center;
  gap: 8px;
  margin-right: 46px;
}
.volume {
  position: relative;
}
.expand {
  position: absolute;
  top: 12px;
  right: 24px;
  display: grid;
  width: 69px;
  height: 69px;
  place-items: center;
  border-radius: 50%;
  background: #fef0e9;
}
.dates {
  display: grid;
  grid-template-columns: repeat(5, 1fr);
  height: 60px;
  margin: 0 12px;
  border-bottom: 2px solid #e2e2e2;
  color: #999;
  font-size: 39px;
  line-height: 56px;
  text-align: center;
}
.dates span {
  padding-left: 26px;
}

.promo {
  display: flex;
  align-items: center;
  height: 90px;
  margin: 18px 18px 17px;
  padding: 0 39px 0 30px;
  border-radius: 45px;
  background: #fcede4;
  color: #dc5b18;
  font-size: 39px;
}
.promo-text {
  flex: 1;
  overflow: hidden;
  margin-left: 15px;
  padding-bottom: 4px;
  color: inherit;
  line-height: 56px;
  text-decoration: none;
  white-space: nowrap;
  mask-image: linear-gradient(90deg, transparent, #000 36px);
}
.promo-text span {
  margin-left: -18px;
}
.bar {
  width: 1px;
  height: 36px;
  margin-right: 17px;
  background: #d9601c;
}

.app > .feed {
  display: grid;
  flex: 1 1 0;
  grid-template-columns: 1fr 1fr;
  gap: 18px;
  min-height: 0;
  overflow: hidden;
  padding: 12px 28px 0 36px;
}
.card {
  position: relative;
  overflow: hidden;
  height: 240px;
  padding: 0 24px;
  border-radius: 24px;
  background: linear-gradient(#fff5f3, #fffaf7 60px);
}
.art {
  position: absolute;
  top: 0;
  right: 0;
  width: 260px;
}
h2 {
  position: relative;
  display: flex;
  align-items: center;
  gap: 13px;
  margin-top: 24px;
  font-size: 41px;
  font-weight: 500;
  line-height: 60px;
}
h2 span {
  padding-bottom: 4px;
  line-height: 56px;
}
.rank {
  position: relative;
  margin-top: 8px;
  padding-left: 4px;
  color: #666;
  line-height: 54px;
}
.rank b {
  color: #dc4a18;
}
.vote {
  position: relative;
  display: flex;
  gap: 5px;
  width: 430px;
  height: 76px;
  box-sizing: border-box;
  margin: 18px 0 0 16px;
  padding: 5px;
  border-radius: 38px;
  background: #fff;
}
.vote button {
  display: flex;
  flex: 1;
  align-items: flex-start;
  justify-content: space-between;
  font-size: 32px;
  font-weight: 500;
  line-height: 42px;
}
.vote i {
  width: 50px;
  height: 50px;
  margin-top: 10px;
  border-radius: 50%;
  background: #fff;
}
.vote .bull {
  padding: 0 36px 0 10px;
  border-radius: 33px 0 0 33px;
  background: #fbdcd9;
  color: #cf4f2a;
}
.vote .bear {
  padding: 0 10px 0 40px;
  border-radius: 0 33px 33px 0;
  background: #d5eedb;
  color: #47a468;
}

.dock {
  display: grid;
  grid-template-columns: 275fr repeat(4, 202fr);
  height: 136px;
  border-top: 1px solid #d2d4d8;
  background: #f7f8fa;
  color: #666;
}
.index {
  display: flex;
  flex-direction: column;
  align-items: center;
  padding-top: 9px;
}
.index strong {
  font-size: 40px;
  font-weight: 400;
  line-height: 60px;
}
.index-row {
  display: flex;
  gap: 52px;
  margin-left: 29px;
  font-size: 35px;
  line-height: 38px;
}
.index > svg,
.index strong {
  margin-left: 3px;
}
.dock-item {
  display: flex;
  flex-direction: column;
  align-items: center;
  gap: 9px;
  padding-top: 10px;
  line-height: 52px;
}

.system {
  display: flex;
  align-items: center;
  justify-content: center;
  gap: 178px;
  height: 116px;
  background: #fbfbfb;
}
</style>
